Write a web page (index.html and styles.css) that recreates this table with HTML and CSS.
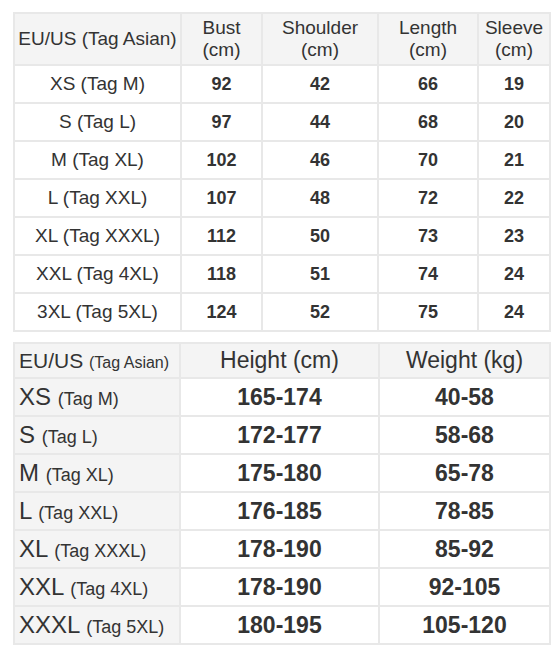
FILE: index.html
```html
<!DOCTYPE html>
<html>
<head>
<meta charset="utf-8">
<link rel="stylesheet" href="styles.css">
</head>
<body>
<div class="page">
<table class="size t1">
  <colgroup><col class="c1"><col class="c2"><col class="c3"><col class="c4"><col class="c5"></colgroup>
  <thead>
    <tr><th>EU/US (Tag Asian)</th><th>Bust<br>(cm)</th><th>Shoulder<br>(cm)</th><th>Length<br>(cm)</th><th>Sleeve<br>(cm)</th></tr>
  </thead>
  <tbody>
    <tr><td class="lbl">XS (Tag M)</td><td>92</td><td>42</td><td>66</td><td>19</td></tr>
    <tr><td class="lbl">S (Tag L)</td><td>97</td><td>44</td><td>68</td><td>20</td></tr>
    <tr><td class="lbl">M (Tag XL)</td><td>102</td><td>46</td><td>70</td><td>21</td></tr>
    <tr><td class="lbl">L (Tag XXL)</td><td>107</td><td>48</td><td>72</td><td>22</td></tr>
    <tr><td class="lbl">XL (Tag XXXL)</td><td>112</td><td>50</td><td>73</td><td>23</td></tr>
    <tr><td class="lbl">XXL (Tag 4XL)</td><td>118</td><td>51</td><td>74</td><td>24</td></tr>
    <tr><td class="lbl">3XL (Tag 5XL)</td><td>124</td><td>52</td><td>75</td><td>24</td></tr>
  </tbody>
</table>
<table class="size t2">
  <colgroup><col class="d1"><col class="d2"><col class="d3"></colgroup>
  <thead>
    <tr><th class="first">EU/US <small>(Tag Asian)</small></th><th>Height (cm)</th><th>Weight (kg)</th></tr>
  </thead>
  <tbody>
    <tr><th class="first">XS <small>(Tag M)</small></th><td>165-174</td><td>40-58</td></tr>
    <tr><th class="first">S <small>(Tag L)</small></th><td>172-177</td><td>58-68</td></tr>
    <tr><th class="first">M <small>(Tag XL)</small></th><td>175-180</td><td>65-78</td></tr>
    <tr><th class="first">L <small>(Tag XXL)</small></th><td>176-185</td><td>78-85</td></tr>
    <tr><th class="first">XL <small>(Tag XXXL)</small></th><td>178-190</td><td>85-92</td></tr>
    <tr><th class="first">XXL <small>(Tag 4XL)</small></th><td>178-190</td><td>92-105</td></tr>
    <tr><th class="first">XXXL <small>(Tag 5XL)</small></th><td>180-195</td><td>105-120</td></tr>
  </tbody>
</table>
</div>
</body>
</html>
```
FILE: styles.css
```css
html, body {
  margin: 0;
  padding: 0;
  background: #ffffff;
}
.page {
  padding: 12px 0 0 13px;
  display: flex;
  flex-direction: column;
  gap: 10px;
  font-family: "Liberation Sans", Arial, sans-serif;
  color: #333333;
}
.size {
  border-collapse: collapse;
  table-layout: fixed;
  width: 536px;
}
.size th, .size td {
  border: 2px solid #e8e8e8;
  padding: 0;
  text-align: center;
  vertical-align: middle;
}
.size th {
  background: #f4f4f4;
  font-weight: normal;
}
.t1 .c1 { width: 167px; }
.t1 .c2 { width: 81px; }
.t1 .c3 { width: 116px; }
.t1 .c4 { width: 100px; }
.t1 .c5 { width: 72px; }
.t1 thead th {
  height: 50px;
  font-size: 19px;
  line-height: 22px;
}
.t1 tbody td {
  height: 36px;
  font-size: 18px;
  font-weight: bold;
}
.t1 tbody td.lbl {
  font-weight: normal;
  font-size: 19px;
}
.t2 .d1 { width: 166px; }
.t2 .d2 { width: 199px; }
.t2 .d3 { width: 171px; }
.t2 thead th {
  height: 33px;
  font-size: 23px;
}
.t2 th.first {
  text-align: left;
  padding-left: 4px;
  font-size: 24px;
}
.t2 th.first small {
  font-size: 18px;
}
.t2 thead th.first {
  font-size: 21px;
}
.t2 thead th.first small {
  font-size: 16px;
}
.t2 tbody th, .t2 tbody td {
  height: 36px;
}
.t2 tbody td {
  font-size: 23px;
  font-weight: bold;
}
```
